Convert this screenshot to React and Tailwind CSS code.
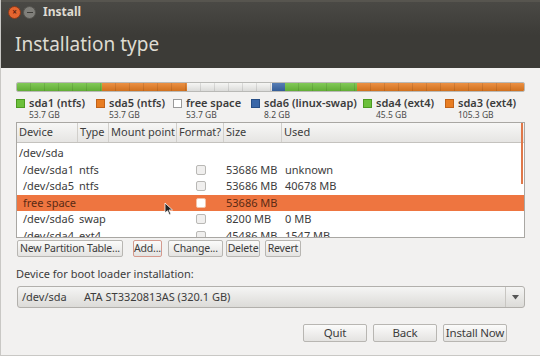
import React from "react";

const segments = [
  { color: "bg-[#6cc03b]", size: 53.7 },
  { color: "bg-[#e87d22]", size: 53.7 },
  { color: "bg-[#f4f4f2]", size: 53.7 },
  { color: "bg-[#3a67a8]", size: 8.2 },
  { color: "bg-[#6cc03b]", size: 45.5 },
  { color: "bg-[#e87d22]", size: 105.3 },
];

const legend = [
  { name: "sda1 (ntfs)", size: "53.7 GB", swatch: "bg-[#6cc03b] border-[#4d9a22]", w: "w-[80px]" },
  { name: "sda5 (ntfs)", size: "53.7 GB", swatch: "bg-[#e87d22] border-[#c0621a]", w: "w-[77px]" },
  { name: "free space", size: "53.7 GB", swatch: "bg-white border-[#9a9a9a]", w: "w-[78px]" },
  { name: "sda6 (linux-swap)", size: "8.2 GB", swatch: "bg-[#3a67a8] border-[#274e86]", w: "w-[112px]" },
  { name: "sda4 (ext4)", size: "45.5 GB", swatch: "bg-[#6cc03b] border-[#4d9a22]", w: "w-[82px]" },
  { name: "sda3 (ext4)", size: "105.3 GB", swatch: "bg-[#e87d22] border-[#c0621a]", w: "w-[80px]" },
];

const rows = [
  { dev: "/dev/sda", type: "", check: false, size: "", used: "", top: true },
  { dev: "/dev/sda1", type: "ntfs", check: true, size: "53686 MB", used: "unknown" },
  { dev: "/dev/sda5", type: "ntfs", check: true, size: "53686 MB", used: "40678 MB" },
  { dev: "free space", type: "", check: true, size: "53686 MB", used: "", sel: true },
  { dev: "/dev/sda6", type: "swap", check: true, size: "8200 MB", used: "0 MB" },
  { dev: "/dev/sda4", type: "ext4", check: true, size: "45486 MB", used: "1547 MB" },
];

const cols = ["w-[61px]", "w-[31px]", "w-[68px]", "w-[47px]", "w-[58px]", "flex-1"];

function Btn({ children, className = "" }) {
  return (
    <button
      className={`h-[17px] px-0 rounded-[2px] border border-[#b8b6b2] bg-gradient-to-b from-[#fbfbfa] to-[#e4e3e1]
                  text-[10.5px] tracking-[-0.2px] leading-none whitespace-nowrap text-[#3c3c3c] ${className}`}
    >
      {children}
    </button>
  );
}

export default function App() {
  return (
    <div
      className="w-[540px] h-[356px] overflow-hidden bg-[#f2f1f0] border-l border-b border-[#c9c8c5] text-[#3c3c3c]"
      style={{ fontFamily: '"Noto Sans", "DejaVu Sans", sans-serif' }}
    >
      {/* HEADER */}
      <div className="h-[68px] bg-gradient-to-b from-[#4a4945] via-[#3c3b37] to-[#3c3b37] border-t-2 border-[#57554f]">
        <div className="flex items-center h-[20px] pl-[7px] gap-[2px]">
          <div className="w-[13px] h-[13px] rounded-full bg-[#e5652f] border border-[#8a3a1a] flex items-center justify-center text-[8px] leading-none text-[#5b2010] font-bold">
            ×
          </div>
          <div className="w-[13px] h-[13px] rounded-full bg-[#807f7a] border border-[#55544f] flex items-center justify-center">
            <div className="w-[6px] h-[1px] bg-[#3c3b37]" />
          </div>
          <span className="ml-[5px] text-[12px] font-bold text-[#dfdbd2]">Install</span>
        </div>
        <div className="pl-[14px] pt-[13px] text-[19px] leading-none text-[#dfdbd2]">Installation type</div>
      </div>

      <div className="px-[15px] pt-[14px]">
        {/* PARTITION BAR */}
        <div className="flex h-[10px] rounded-[2px] overflow-hidden border border-[#b9b9b6]">
          {segments.map((s, i) => (
            <div
              key={i}
              className={`${s.color} h-full`}
              style={{
                flexGrow: s.size,
                flexBasis: 0,
                backgroundImage:
                  "repeating-linear-gradient(90deg, transparent 0 13px, rgba(0,0,0,0.1) 13px 14px), linear-gradient(rgba(255,255,255,0.15), rgba(0,0,0,0.1))",
              }}
            />
          ))}
        </div>

        {/* LEGEND */}
        <div className="flex mt-[5px] h-[23px]">
          {legend.map((l) => (
            <div key={l.name} className={`flex ${l.w}`}>
              <div className={`w-[9px] h-[9px] mt-[2px] border ${l.swatch}`} />
              <div className="ml-[4px] flex flex-col gap-[1px]">
                <div className="text-[11px] leading-[12px] font-semibold text-[#3c3c3c] whitespace-nowrap">{l.name}</div>
                <div className="text-[8.5px] leading-[9px] text-[#4a4a4a]">{l.size}</div>
              </div>
            </div>
          ))}
        </div>

        {/* TABLE */}
        <div className="relative mt-[2px] h-[116px] border border-[#a9a7a3] bg-white overflow-hidden">
          <div className="flex h-[20px] bg-gradient-to-b from-[#f7f7f6] to-[#e6e5e3] border-b border-[#c4c2be] text-[11px]">
            {["Device", "Type", "Mount point", "Format?", "Size", "Used"].map((h, i) => (
              <div key={h} className={`${cols[i]} flex items-center pl-[2px] whitespace-nowrap ${i < 5 ? "border-r border-[#d1cfcb]" : ""}`}>
                {h}
              </div>
            ))}
          </div>
          <div className="h-[2px]" />
          {rows.map((r) => (
            <div
              key={r.dev}
              className={`flex h-[16.5px] items-center text-[11px] ${r.sel ? "bg-[#ee7540] text-[#5a2a14]" : ""}`}
            >
              <div className={`${cols[0]} ${r.top ? "pl-[2px]" : "pl-[6px]"} whitespace-nowrap`}>{r.dev}</div>
              <div className={`${cols[1]} pl-[1px]`}>{r.type}</div>
              <div className={cols[2]} />
              <div className={`${cols[3]} flex justify-center`}>
                {r.check && (
                  <div
                    className={`w-[10px] h-[10px] rounded-[2px] border ${
                      r.sel ? "bg-white border-[#f3c2a8]" : "bg-[#f0efee] border-[#b9b8b5]"
                    }`}
                  />
                )}
              </div>
              <div className={`${cols[4]} pl-[2px] whitespace-nowrap`}>{r.size}</div>
              <div className={`${cols[5]} pl-[3px] whitespace-nowrap`}>{r.used}</div>
            </div>
          ))}
          {/* scrollbar */}
          <div className="absolute right-[1px] top-[0px] w-[2px] h-[61px] bg-[#e0784a]" />
          {/* cursor */}
          <svg className="absolute left-[147px] top-[79px]" width="10" height="14" viewBox="0 0 10 14">
            <path d="M1 1 L1 11 L3.5 8.7 L5.5 13 L7 12.3 L5 8 L8.5 8 Z" fill="#222" stroke="#fff" strokeWidth="0.8" />
          </svg>
        </div>

        {/* BUTTONS */}
        <div className="flex items-center mt-[2px] ml-[1px]">
          <Btn className="w-[106px]">New Partition Table...</Btn>
          <Btn className="w-[29px] ml-[10px] border-[#d49a8e]">Add...</Btn>
          <Btn className="w-[55px] ml-[6px]">Change...</Btn>
          <Btn className="w-[34px] ml-[3px]">Delete</Btn>
          <Btn className="w-[36px] ml-[5px] from-[#dddcda] to-[#d2d1ce]">Revert</Btn>
        </div>

        <div className="mt-[10px] text-[11px] leading-[14px]">Device for boot loader installation:</div>

        {/* COMBO */}
        <div className="flex items-center mt-[5px] ml-[1px] h-[22px] rounded-[3px] border border-[#b2b0ac] bg-gradient-to-b from-[#f5f5f4] to-[#dcdbd8] text-[11px]">
          <span className="pl-[4px] w-[66px]">/dev/sda</span>
          <span className="flex-1">ATA ST3320813AS (320.1 GB)</span>
          <div className="h-full w-[1px] bg-[#c8c6c2]" />
          <div className="w-[18px] flex justify-center">
            <svg width="7" height="5" viewBox="0 0 7 5">
              <path d="M0 0 H7 L3.5 4.5 Z" fill="#555" />
            </svg>
          </div>
        </div>

        {/* FOOTER */}
        <div className="flex justify-end gap-[6px] mt-[16px] mr-[18px]">
          <Btn className="w-[64px] h-[18px] text-[11.5px]">Quit</Btn>
          <Btn className="w-[64px] h-[18px] text-[11.5px]">Back</Btn>
          <Btn className="w-[64px] h-[18px] text-[11.5px]">Install Now</Btn>
        </div>
      </div>
    </div>
  );
}
